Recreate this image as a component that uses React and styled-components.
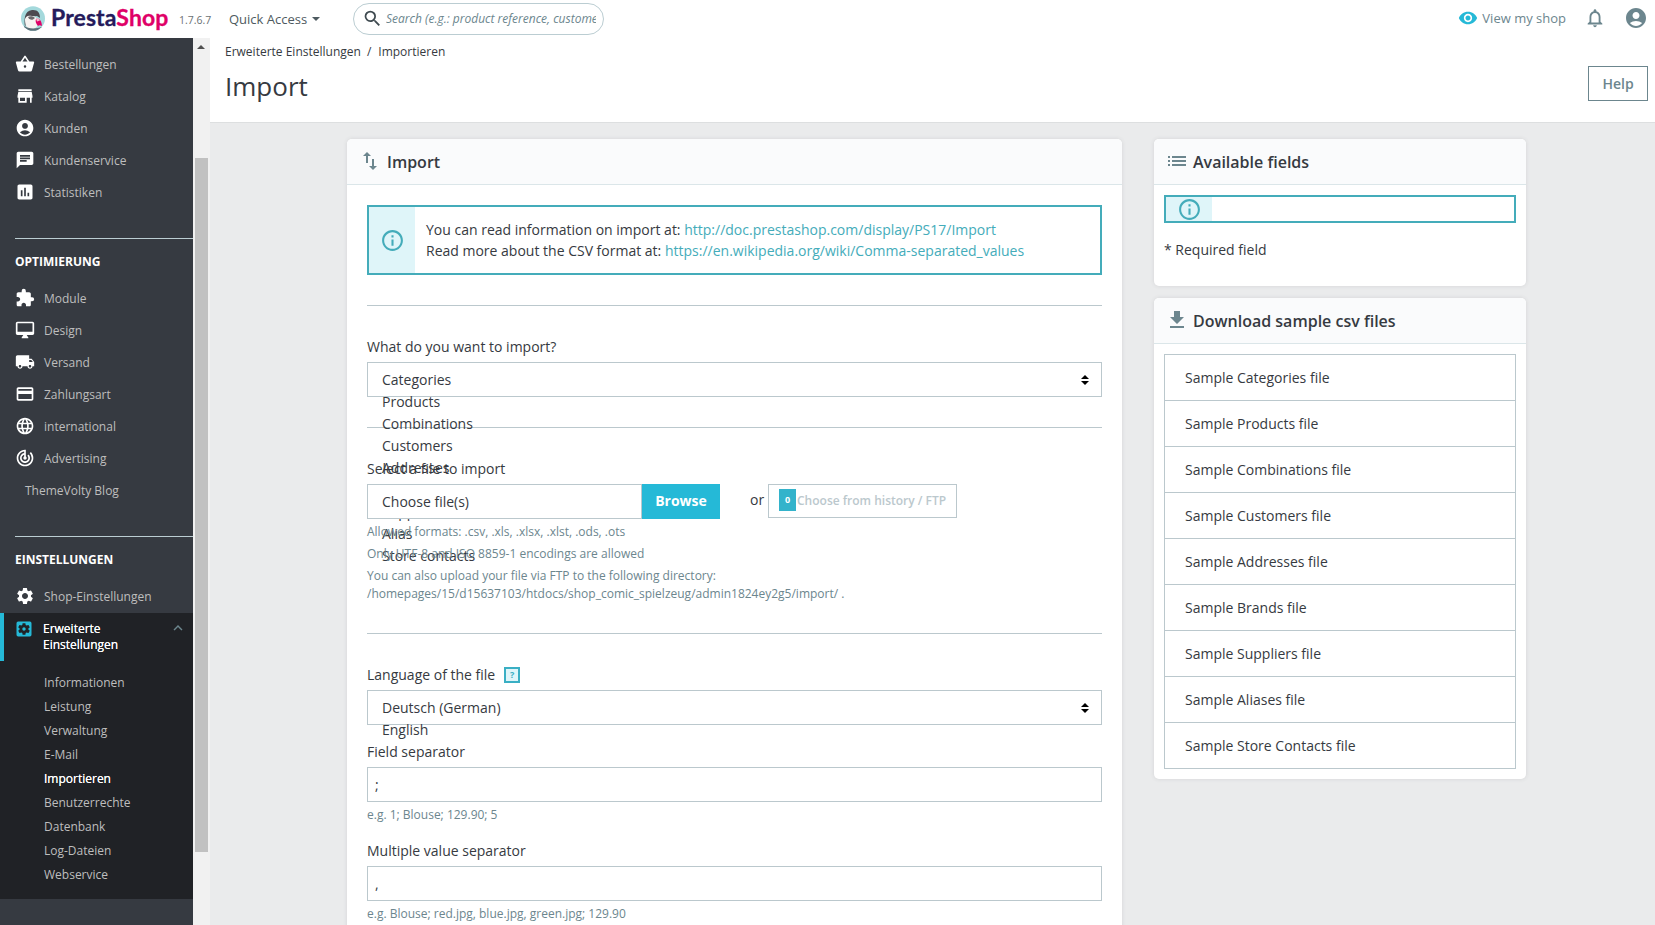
import styled, { createGlobalStyle, css } from "styled-components";
import {
  MdStore,
  MdAccountCircle,
  MdChat,
  MdAssessment,
  MdExtension,
  MdLocalShipping,
  MdPayment,
  MdLanguage,
  MdTrackChanges,
  MdSettings,
  MdSettingsApplications,
  MdKeyboardArrowUp,
  MdSearch,
  MdRemoveRedEye,
  MdNotificationsNone,
  MdImportExport,
  MdList,
  MdFileDownload,
  MdInfoOutline,
} from "react-icons/md";

const BasketIcon = () => (
  <svg width="1em" height="1em" viewBox="0 0 24 24" fill="currentColor">
    <path d="M17.210 9l-4.380-6.560a1 1 0 0 0-1.660.01L6.790 9H2c-.55 0-1 .45-1 1l.04.27 2.540 9.270A2 2 0 0 0 5.500 21h13a2 2 0 0 0 1.930-1.460l2.540-9.270L23 10c0-.55-.45-1-1-1h-4.790zM9 9l3-4.400L15 9H9zm3 7.500a1.500 1.500 0 1 1 0-3 1.500 1.500 0 0 1 0 3z" />
  </svg>
);

const MonitorIcon = () => (
  <svg width="1em" height="1em" viewBox="0 0 24 24" fill="currentColor">
    <path d="M21 2H3c-1.100 0-2 .9-2 2v12c0 1.100.9 2 2 2h7l-2 3v1h8v-1l-2-3h7c1.100 0 2-.9 2-2V4c0-1.100-.9-2-2-2zm0 12H3V4h18v10z" />
  </svg>
);

const sellLinks = [
  { icon: BasketIcon, label: "Bestellungen" },
  { icon: MdStore, label: "Katalog" },
  { icon: MdAccountCircle, label: "Kunden" },
  { icon: MdChat, label: "Kundenservice" },
  { icon: MdAssessment, label: "Statistiken" },
];

const improveLinks = [
  { icon: MdExtension, label: "Module" },
  { icon: MonitorIcon, label: "Design" },
  { icon: MdLocalShipping, label: "Versand" },
  { icon: MdPayment, label: "Zahlungsart" },
  { icon: MdLanguage, label: "international" },
  { icon: MdTrackChanges, label: "Advertising" },
  { label: "ThemeVolty Blog" },
];

const subLinks = [
  "Informationen",
  "Leistung",
  "Verwaltung",
  "E-Mail",
  "Importieren",
  "Benutzerrechte",
  "Datenbank",
  "Log-Dateien",
  "Webservice",
];

const entities = [
  "Categories",
  "Products",
  "Combinations",
  "Customers",
  "Addresses",
  "Brands",
  "Suppliers",
  "Alias",
  "Store contacts",
];

const samples = [
  "Categories",
  "Products",
  "Combinations",
  "Customers",
  "Addresses",
  "Brands",
  "Suppliers",
  "Aliases",
  "Store Contacts",
];

const Logo = () => (
  <svg width="24" height="25" viewBox="0 0 24 25">
    <defs>
      <clipPath id="puffin">
        <ellipse cx="12" cy="12.5" rx="12" ry="12.3" />
      </clipPath>
    </defs>
    <g clipPath="url(#puffin)">
      <rect width="24" height="25" fill="#a4d9dc" />
      <path d="M4 21C3 14 3 5 11 4c6-.5 8 3 8 8l-3-2-9 1z" fill="#4d4a50" />
      <path d="M4 14c0-4 4-5 7-4 4 0 6 3 6 7s-3 6-7 6-6-4-6-9z" fill="#f6f3f1" />
      <path d="M7 11c2-1 5-1 7 1l-2 1.500c-2 .5-4 0-5-2.500z" fill="#6b686c" />
      <path d="M15 13c2-2 6 1 6 7-2-1-3-1-4 0-2-2-3-5-2-7z" fill="#df0067" />
      <path d="M15 12.500c1-1 3 0 4 2l-3 1z" fill="#f3b8c9" />
      <path d="M3 20c4 3 12 3 18 1v4H3z" fill="#5c6f77" />
    </g>
  </svg>
);

const NavLinks = ({ links }) => (
  <NavList>
    {links.map(({ icon: Icon, label }) => (
      <NavItem key={label} $plain={!Icon}>
        {Icon && <Icon />}
        {label}
      </NavItem>
    ))}
  </NavList>
);

const Choices = ({ options }) => (
  <Select>
    <Options>
      {options.map((option) => (
        <Option key={option}>{option}</Option>
      ))}
    </Options>
    <SelectArrows width="8" height="10" viewBox="0 0 8 10">
      <path d="M4 0l4 4H0zM0 6h8l-4 4z" />
    </SelectArrows>
  </Select>
);

const App = () => {
  return (
    <Page>
      <GlobalStyle />

      <TopBar>
        <Brand>
          <Logo />
          <BrandName>
            Presta<span>Shop</span>
          </BrandName>
          <Version>1.7.6.7</Version>
        </Brand>
        <QuickAccess>
          Quick Access <Caret />
        </QuickAccess>
        <SearchBox>
          <MdSearch />
          <SearchText>Search (e.g.: product reference, customer name…)</SearchText>
        </SearchBox>
        <TopActions>
          <ViewShop>
            <MdRemoveRedEye />
            View my shop
          </ViewShop>
          <MdNotificationsNone size={22} />
          <MdAccountCircle size={24} />
        </TopActions>
      </TopBar>

      <Body>
        <Sidebar>
          <Nav>
            <NavLinks links={sellLinks} />
            <NavSection>
              <NavTitle>OPTIMIERUNG</NavTitle>
              <NavLinks links={improveLinks} />
            </NavSection>
            <NavSection>
              <NavTitle>EINSTELLUNGEN</NavTitle>
              <NavItem>
                <MdSettings />
                Shop-Einstellungen
              </NavItem>
            </NavSection>
            <ActiveGroup>
              <ActiveItem>
                <MdSettingsApplications />
                <span>Erweiterte Einstellungen</span>
                <MdKeyboardArrowUp />
              </ActiveItem>
              <SubList>
                {subLinks.map((label) => (
                  <SubItem key={label} $current={label === "Importieren"}>
                    {label}
                  </SubItem>
                ))}
              </SubList>
            </ActiveGroup>
          </Nav>
          <ScrollTrack>
            <ScrollArrow />
            <ScrollThumb />
          </ScrollTrack>
        </Sidebar>

        <Main>
          <PageHead>
            <div>
              <Breadcrumb>
                <span>Erweiterte Einstellungen</span>
                <span>/</span>
                <span>Importieren</span>
              </Breadcrumb>
              <PageTitle>Import</PageTitle>
            </div>
            <HelpButton>Help</HelpButton>
          </PageHead>

          <Content>
            <Card>
              <CardHeader>
                <MdImportExport />
                Import
              </CardHeader>
              <FormBody>
                <Alert>
                  <AlertIcon>
                    <MdInfoOutline />
                  </AlertIcon>
                  <AlertText>
                    You can read information on import at:{" "}
                    <a>http://doc.prestashop.com/display/PS17/Import</a>
                    <br />
                    Read more about the CSV format at:{" "}
                    <a>https://en.wikipedia.org/wiki/Comma-separated_values</a>
                  </AlertText>
                </Alert>

                <Divider />
                <Label>What do you want to import?</Label>
                <Choices options={entities} />

                <Divider />
                <Label>Select a file to import</Label>
                <FileRow>
                  <FileInput>Choose file(s)</FileInput>
                  <Browse>Browse</Browse>
                  <Or>or</Or>
                  <HistoryButton>
                    <Badge>0</Badge>
                    Choose from history / FTP
                  </HistoryButton>
                </FileRow>
                <Hints>
                  <Hint>Allowed formats: .csv, .xls, .xlsx, .xlst, .ods, .ots</Hint>
                  <Hint>Only UTF-8 and ISO 8859-1 encodings are allowed</Hint>
                  <Hint>
                    You can also upload your file via FTP to the following directory:
                    <br />
                    /homepages/15/d15637103/htdocs/shop_comic_spielzeug/admin1824ey2g5/import/ .
                  </Hint>
                </Hints>

                <Divider />
                <Label>
                  Language of the file <HelpBox>?</HelpBox>
                </Label>
                <Choices options={["Deutsch (German)", "English"]} />

                <Field>
                  <Label>Field separator</Label>
                  <Input defaultValue=";" />
                  <Hint>e.g. 1; Blouse; 129.90; 5</Hint>
                </Field>
                <Field>
                  <Label>Multiple value separator</Label>
                  <Input defaultValue="," />
                  <Hint>e.g. Blouse; red.jpg, blue.jpg, green.jpg; 129.90</Hint>
                </Field>
              </FormBody>
            </Card>

            <Aside>
              <Card>
                <CardHeader $wide>
                  <MdList />
                  Available fields
                </CardHeader>
                <FieldsBody>
                  <Alert $slim>
                    <AlertIcon>
                      <MdInfoOutline />
                    </AlertIcon>
                  </Alert>
                  <p>* Required field</p>
                </FieldsBody>
              </Card>
              <Card>
                <CardHeader $wide>
                  <MdFileDownload />
                  Download sample csv files
                </CardHeader>
                <SampleList>
                  {samples.map((name) => (
                    <SampleItem key={name}>Sample {name} file</SampleItem>
                  ))}
                </SampleList>
              </Card>
            </Aside>
          </Content>
        </Main>
      </Body>
    </Page>
  );
};

export default App;

const GlobalStyle = createGlobalStyle`
  * {
    box-sizing: border-box;
  }

  body {
    margin: 0;
    overflow: hidden;
    font-family: "Open Sans", sans-serif;
    font-size: 14px;
    color: #363a41;
    background: #eaebec;
  }

  p {
    margin: 0;
  }

  svg {
    flex-shrink: 0;
  }
`;

const Page = styled.div`
  height: 100vh;
  display: flex;
  flex-direction: column;
  overflow: hidden;
`;

const TopBar = styled.header`
  height: 38px;
  flex-shrink: 0;
  display: flex;
  align-items: center;
  padding: 0 7px 2px 21px;
  background: white;
  color: #6c868e;
`;

const Brand = styled.div`
  width: 208px;
  display: flex;
  align-items: center;
`;

const BrandName = styled.div`
  width: 134px;
  padding: 0 0 2px 6px;
  font-family: Lato, sans-serif;
  font-size: 23px;
  font-weight: 700;
  line-height: 24px;
  letter-spacing: 0.1px;
  color: #251b5b;
  -webkit-text-stroke: 0.3px;

  span {
    color: #df0067;
  }
`;

const Version = styled.span`
  padding-top: 4px;
  font-size: 10.5px;
  color: #6b6f73;
`;

const QuickAccess = styled.div`
  width: 124px;
  display: flex;
  align-items: center;
  padding-top: 1px;
  font-size: 13px;
  color: #4e5a60;
`;

const Caret = styled.i`
  margin-left: 5px;
  border: 4px solid transparent;
  border-top-color: #4e5a60;
  border-bottom: 0;
`;

const SearchBox = styled.div`
  width: 251px;
  height: 32px;
  margin-top: 2px;
  padding: 0 7px 1px 8px;
  display: flex;
  align-items: center;
  gap: 3px;
  border: 1px solid #bbcdd2;
  border-radius: 16px;

  svg {
    font-size: 21px;
    color: #3f4a50;
  }
`;

const SearchText = styled.span`
  overflow: hidden;
  white-space: nowrap;
  font-size: 12px;
  font-style: italic;
`;

const TopActions = styled.div`
  margin-left: auto;
  display: flex;
  align-items: center;
  gap: 18px;
`;

const ViewShop = styled.div`
  display: flex;
  align-items: center;
  gap: 4px;
  font-size: 13px;

  svg {
    font-size: 20px;
    color: #25b9d7;
  }
`;

const Body = styled.div`
  flex: 1;
  display: flex;
  min-height: 0;
`;

const Sidebar = styled.aside`
  width: 210px;
  flex-shrink: 0;
  display: flex;
`;

const Nav = styled.nav`
  width: 193px;
  padding-top: 10px;
  background: #363a41;
  color: #bebebe;
  font-size: 12px;
`;

const NavList = styled.div`
  display: flex;
  flex-direction: column;
`;

const NavItem = styled.div`
  height: 32px;
  display: flex;
  align-items: center;
  gap: 9px;
  padding-left: ${({ $plain }) => ($plain ? "25px" : "15px")};

  svg {
    font-size: 20px;
    color: white;
  }
`;

const NavSection = styled.div`
  margin-top: 30px;
`;

const NavTitle = styled.div`
  height: 44px;
  margin: 0 0 0 15px;
  padding-top: 14px;
  border-top: 1px solid #bbcdd2;
  font-weight: 700;
  line-height: 17px;
  color: white;
`;

const ActiveGroup = styled.div`
  height: 286px;
  margin-top: 1px;
  background: #202226;
`;

const ActiveItem = styled.div`
  height: 48px;
  display: flex;
  align-items: flex-start;
  padding: 6px 6px 0 10px;
  border-left: 4px solid #25b9d7;
  color: white;
  line-height: 16px;
  text-shadow: 0 0 0.5px white;

  span {
    width: 126px;
    margin: 2px 0 0 9px;
  }

  svg:first-child {
    font-size: 20px;
    color: #25b9d7;
  }

  svg:last-child {
    font-size: 18px;
    color: #6c868e;
  }
`;

const SubList = styled.div`
  padding: 10px 0 0 44px;
`;

const SubItem = styled.div`
  line-height: 24px;

  ${({ $current }) =>
    $current &&
    css`
      color: white;
      text-shadow: 0 0 0.5px white;
    `}
`;

const ScrollTrack = styled.div`
  width: 17px;
  padding: 7px 2px 0;
  background: #f1f1f1;
`;

const ScrollArrow = styled.div`
  width: 0;
  margin: 0 0 109px 2px;
  border: 4px solid transparent;
  border-top: 0;
  border-bottom-color: #505050;
`;

const ScrollThumb = styled.div`
  height: 694px;
  background: #c1c1c1;
`;

const Main = styled.main`
  flex: 1;
  min-width: 0;
`;

const PageHead = styled.div`
  height: 85px;
  display: flex;
  justify-content: space-between;
  padding: 5px 7px 0 15px;
  background: white;
  border-bottom: 1px solid #dddfe0;
`;

const Breadcrumb = styled.div`
  display: flex;
  gap: 6px;
  font-size: 12px;
  line-height: 18px;

  span:nth-child(2) {
    margin-right: 1px;
  }
`;

const PageTitle = styled.h1`
  margin: 8px 0 0;
  font-size: 26px;
  font-weight: 400;
  line-height: 34px;
`;

const HelpButton = styled.button`
  width: 60px;
  height: 35px;
  margin-top: 23px;
  background: white;
  border: 1px solid #6c868e;
  font-family: inherit;
  font-size: 14px;
  font-weight: 600;
  color: #6c868e;
`;

const Content = styled.div`
  display: flex;
  align-items: flex-start;
  gap: 32px;
  padding: 16px 0 0 137px;
`;

const Card = styled.section`
  width: 775px;
  background: white;
  border-radius: 5px;
  box-shadow: 0 0 4px rgba(54, 58, 65, 0.12);
`;

const CardHeader = styled.h3`
  height: 46px;
  margin: 0;
  display: flex;
  align-items: center;
  gap: ${({ $wide }) => ($wide ? "4px" : "5px")};
  padding: 0 11px;
  background: #fafbfc;
  border-bottom: 1px solid #dbe6e9;
  border-radius: 5px 5px 0 0;
  font-size: 16px;
  font-weight: 600;

  svg {
    margin-top: -2px;
    font-size: 24px;
    color: #6c868e;
  }
`;

const FormBody = styled.div`
  padding: 20px 20px 40px;
`;

const Alert = styled.div`
  height: ${({ $slim }) => ($slim ? "28px" : "70px")};
  display: flex;
  align-items: stretch;
  border: 2px solid #44acba;
`;

const AlertIcon = styled.div`
  width: 46px;
  display: flex;
  align-items: center;
  justify-content: center;
  background: #dff5f9;

  svg {
    font-size: 25px;
    color: #44acba;
  }
`;

const AlertText = styled.p`
  padding: 12px 10px 12px 11px;
  line-height: 21px;

  a {
    color: #44acba;
  }
`;

const Divider = styled.hr`
  height: 1px;
  margin: 30px 0;
  border: 0;
  background: #bbc8cd;
`;

const Label = styled.div`
  display: flex;
  align-items: center;
  height: 21px;
  margin-bottom: 5px;
`;

const Select = styled.div`
  height: 35px;
  display: flex;
  justify-content: space-between;
  align-items: flex-start;
  padding: 0 12px 0 14px;
  border: 1px solid #bbc8cd;
`;

const Options = styled.div`
  padding-top: 6px;
`;

const Option = styled.div`
  line-height: 22px;
`;

const SelectArrows = styled.svg`
  margin-top: 12px;
`;

/* sits above the options that run out of the select */
const FileRow = styled.div`
  position: relative;
  z-index: 1;
  height: 35px;
  display: flex;
`;

const FileInput = styled.div`
  width: 275px;
  padding-left: 14px;
  line-height: 33px;
  background: white;
  border: 1px solid #bbc8cd;
`;

const Browse = styled.button`
  width: 78px;
  padding: 0 0 2px;
  border: 0;
  background: #25b9d7;
  font-family: inherit;
  font-size: 14px;
  font-weight: 700;
  color: white;
`;

const Or = styled.span`
  width: 48px;
  padding-left: 30px;
  line-height: 32px;
`;

const HistoryButton = styled.div`
  width: 189px;
  height: 34px;
  display: flex;
  align-items: center;
  padding: 0 0 2px 10px;
  white-space: nowrap;
  border: 1px solid #bbc8cd;
  font-size: 12px;
  font-weight: 600;
  color: #bbc8cd;
`;

const Badge = styled.span`
  width: 17px;
  height: 22px;
  margin-right: 1px;
  text-align: center;
  line-height: 22px;
  background: #33b3cb;
  font-size: 9px;
  font-weight: 700;
  color: white;
`;

const Hints = styled.div`
  display: flex;
  flex-direction: column;
  gap: 4px;
  padding-top: 4px;
`;

const Hint = styled.div`
  font-size: 12px;
  line-height: 18px;
  color: #6c868e;
`;

const HelpBox = styled.span`
  width: 16px;
  height: 16px;
  margin-left: 9px;
  text-align: center;
  line-height: 12px;
  background: #dff5f9;
  border: 2px solid #3aafc4;
  font-size: 9px;
  font-weight: 700;
  color: #3aafc4;
`;

const Field = styled.div`
  padding-top: 16px;

  ${Hint} {
    margin-top: 4px;
  }
`;

const Input = styled.input`
  display: block;
  width: 100%;
  height: 35px;
  padding: 0 7px;
  border: 1px solid #bbc8cd;
  font-family: inherit;
  font-size: 14px;
  color: #363a41;
`;

const Aside = styled.div`
  display: flex;
  flex-direction: column;
  gap: 12px;

  ${Card} {
    width: 372px;
  }
`;

const FieldsBody = styled.div`
  height: 101px;
  padding: 10px;

  p {
    margin-top: 16px;
    line-height: 21px;
  }
`;

const SampleList = styled.div`
  padding: 10px;
`;

const SampleItem = styled.div`
  height: 46px;
  padding-left: 20px;
  line-height: 46px;
  border: 1px solid #bbc8cd;
  border-bottom: 0;

  &:last-child {
    height: 47px;
    border-bottom: 1px solid #bbc8cd;
  }
`;
